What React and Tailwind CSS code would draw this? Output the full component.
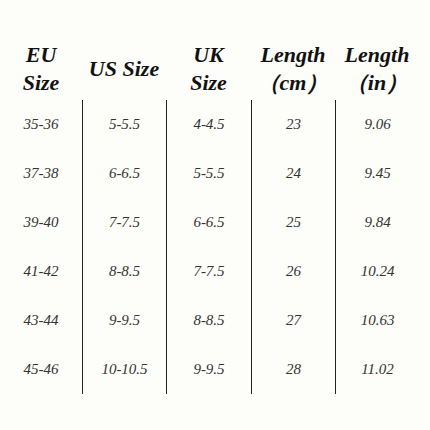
const headers = [
  ['EU', 'Size'],
  ['US Size'],
  ['UK', 'Size'],
  ['Length', '（cm）'],
  ['Length', '（in）']
]

const rows = [
  ['35-36', '5-5.5', '4-4.5', '23', '9.06'],
  ['37-38', '6-6.5', '5-5.5', '24', '9.45'],
  ['39-40', '7-7.5', '6-6.5', '25', '9.84'],
  ['41-42', '8-8.5', '7-7.5', '26', '10.24'],
  ['43-44', '9-9.5', '8-8.5', '27', '10.63'],
  ['45-46', '10-10.5', '9-9.5', '28', '11.02']
]

const App = () => {
  return (
    <div className="w-[430px] h-[430px] bg-[#fdfdf9] pt-[38px] overflow-hidden">
      {/* Header */}
      <div className="grid grid-cols-[82px_84px_85px_84px_84px] h-[62px]">
        {headers.map((h, i) => (
          <div key={i} className="font-['Liberation_Serif'] flex flex-col items-center justify-center text-[22px] leading-[28px] font-bold italic text-[#111]">
            {h.map((line, j) => (
              <span key={j}>{line}</span>
            ))}
          </div>
        ))}
      </div>

      {/* Body */}
      <div className="grid grid-cols-[82px_84px_85px_84px_84px]">
        {rows.map((row, r) =>
          row.map((cell, c) => (
            <div
              key={`${r}-${c}`}
              className={c > 0
                ? "font-['Liberation_Serif'] h-[49px] flex items-center justify-center text-[15px] italic text-[#333] border-l-[1.5px] border-[#222]"
                : "font-['Liberation_Serif'] h-[49px] flex items-center justify-center text-[15px] italic text-[#333]"}
            >
              {cell}
            </div>
          ))
        )}
      </div>
    </div>
  )
}

export default App
